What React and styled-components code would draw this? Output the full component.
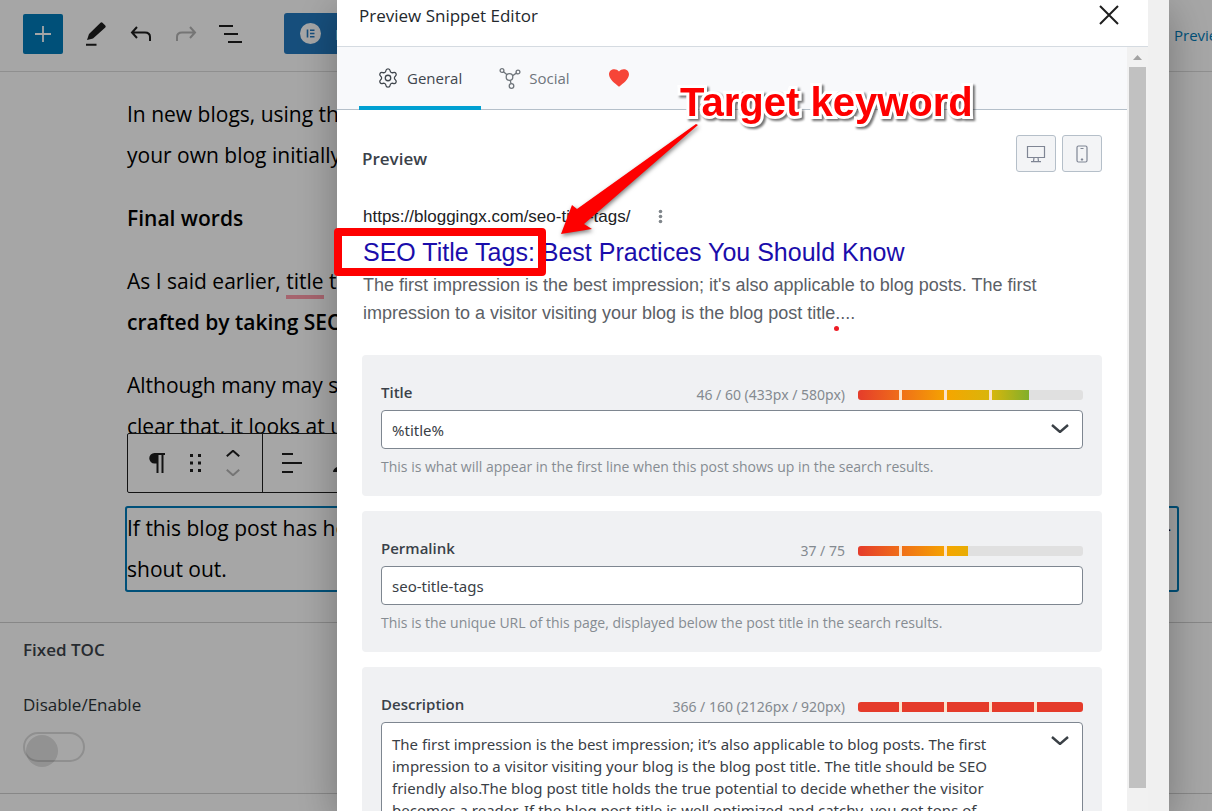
import { useState } from "react";
import styled, { createGlobalStyle } from "styled-components";
import { Settings } from "lucide-react";

const GlobalStyle = createGlobalStyle`
  * {
    box-sizing: border-box;
  }

  body {
    margin: 0;
    overflow: hidden;
    background: #fff;
    font-family: "Open Sans", "Noto Sans", sans-serif;
  }

  button {
    padding: 0;
    border: none;
    background: none;
    font: inherit;
    color: inherit;
  }

  svg {
    display: block;
    flex: none;
  }

  p,
  h1,
  h2,
  h3 {
    margin: 0;
  }
`;

//Editor behind the modal
const Editor = styled.div`
  height: 100vh;
  overflow: hidden;
`;

const TopBar = styled.header`
  display: flex;
  align-items: center;
  height: 72px;
  padding: 0 0 4px 23px;
  border-bottom: 1px solid #dcdcdc;
`;

const InserterButton = styled.button`
  display: grid;
  place-items: center;
  flex: none;
  width: 40px;
  height: 40px;
  margin-right: 12px;
  border-radius: 2px;
  background: #007cba;
`;

const ToolButton = styled.button`
  display: grid;
  place-items: center;
  flex: none;
  width: 41px;
  height: 40px;
  margin-right: 4px;
`;

const ElementorButton = styled.button`
  display: flex;
  align-items: center;
  gap: 14px;
  height: 41px;
  margin-left: 29px;
  padding: 0 16px;
  border-radius: 3px;
  background: #2379bf;
  color: #fff;
  font-size: 15px;
  white-space: nowrap;
`;

const PreviewLink = styled.a`
  flex: 0 0 38px;
  min-width: 0;
  margin-left: auto;
  padding-top: 2px;
  color: #007cba;
  font-size: 15px;
  text-decoration: none;
  white-space: nowrap;
`;

const Content = styled.main`
  display: flex;
  flex-direction: column;
  gap: 22px;
  padding: 22px 35px 32px 127px;
  color: #000;
  font-size: 21px;
  line-height: 41px;
  white-space: nowrap;
`;

const Heading = styled.h3`
  font-size: 21px;
  font-weight: 600;
`;

const Strong = styled.strong`
  font-weight: 600;
`;

const Marked = styled.span`
  display: inline-block;
  box-shadow: 0 4px 0 #ff9aa9;
  line-height: 28px;
`;

const SelectedBlock = styled.div`
  position: relative;
  margin-top: 39px;
  border-radius: 1px;
  box-shadow: 0 0 0 2px #007cba;
`;

const SpreadLine = styled.p`
  display: flex;
  justify-content: space-between;
  padding-right: 6px;
`;

const BlockToolbar = styled.div`
  position: absolute;
  left: 0;
  bottom: calc(100% + 15px);
  display: flex;
  height: 60px;
  border: 1px solid #1e1e1e;
  border-radius: 2px;
  background: #fff;
`;

const ToolbarGroup = styled.div`
  display: flex;
  align-items: center;
  gap: ${(props) => props.$gap}px;
  padding: 0 22px 0 18px;
  border-right: 1px solid #1e1e1e;
`;

const Movers = styled.div`
  display: flex;
  flex-direction: column;
  gap: 12px;
`;

const MetaBox = styled.section`
  display: flex;
  flex-direction: column;
  align-items: flex-start;
  height: 172px;
  padding: 15px 23px 0;
  border-top: 1px solid #d0d0d0;
  border-bottom: 1px solid #d0d0d0;
  color: #2c3338;
  font-size: 17px;
  line-height: 24px;
`;

const MetaTitle = styled.h2`
  margin-bottom: 31px;
  color: #3c434a;
  font-size: 17px;
  font-weight: 600;
`;

const Toggle = styled.input`
  appearance: none;
  width: 62px;
  height: 30px;
  margin: 15px 0 0;
  border: 2px solid #dcdcdc;
  border-radius: 16px;

  &::before {
    content: "";
    display: block;
    width: 32px;
    height: 32px;
    margin: 1px;
    border-radius: 50%;
    background: rgba(0, 0, 0, 0.12);
  }
`;

//Modal
const Overlay = styled.div`
  position: fixed;
  inset: 0;
  display: flex;
  padding: 0 43px 0 337px;
  background: rgba(0, 0, 0, 0.35);
`;

const Modal = styled.div`
  display: flex;
  flex: 1;
  min-width: 0;
  padding-right: 21px;
  background: #f0f0f0;
  box-shadow: 0 10px 40px rgba(0, 0, 0, 0.3);
`;

const ModalColumn = styled.div`
  display: flex;
  flex-direction: column;
  flex: 1;
  min-width: 0;
`;

const ModalHeader = styled.div`
  display: flex;
  justify-content: space-between;
  height: 47px;
  padding: 3px 28px 0 22px;
  border-bottom: 1px solid #d5dbe1;
  background: #fff;
`;

const ModalTitle = styled.h1`
  color: #23282d;
  font-size: 17px;
  font-weight: 500;
  line-height: 26px;
`;

const CloseButton = styled.button`
  height: 24px;
`;

const ModalBody = styled.div`
  display: flex;
  flex: 1;
  min-height: 0;
`;

const Panel = styled.div`
  flex: 1;
  min-width: 0;
  overflow: hidden;
  background: #fff;
`;

const ScrollTrack = styled.div`
  display: flex;
  flex-direction: column;
  align-items: center;
  flex: 0 0 21px;
  padding: 8px 0 23px;
  background: #f1f1f1;
`;

const ScrollThumb = styled.div`
  flex: 1;
  width: 17px;
  margin-top: 7px;
  background: #c1c1c1;
`;

const Tabs = styled.div`
  display: flex;
  height: 63px;
  padding-left: 22px;
  border-bottom: 1px solid #b5c0ca;
  background: #f8f9fb;
`;

const Tab = styled.button`
  display: flex;
  align-items: center;
  gap: 8px;
  height: 63px;
  padding: 2px 19px 0 18px;
  border-bottom: 4px solid ${(props) => (props.$active ? "#00a0d2" : "transparent")};
  color: ${(props) => (props.$active ? "#40464d" : "#6f757b")};
  font-size: 15px;
`;

const PanelContent = styled.div`
  display: flex;
  flex-direction: column;
  gap: 15px;
  padding: 25px 25px 0;
`;

const SectionHead = styled.div`
  display: flex;
  justify-content: space-between;
  align-items: center;
`;

const SectionTitle = styled.h2`
  padding-top: 10px;
  color: #3a4149;
  font-size: 17px;
  font-weight: 600;
`;

const DeviceButtons = styled.div`
  display: flex;
  gap: 6px;
`;

const DeviceButton = styled.button`
  display: grid;
  place-items: center;
  width: 40px;
  height: 37px;
  border: 1px solid #b5bfc9;
  border-radius: 3px;
  background: #f3f4f6;
  color: #7f8594;
`;

const Snippet = styled.div`
  display: flex;
  flex-direction: column;
  padding: 17px 0 13px 1px;
  font-family: "Liberation Sans", Arial, sans-serif;
`;

const SnippetUrl = styled.div`
  display: flex;
  align-items: center;
  gap: 28px;
  color: #202124;
  font-size: 17px;
  line-height: 26px;
`;

const SnippetTitle = styled.a`
  padding: 4px 0 1px;
  color: #1a0dab;
  font-size: 25px;
  line-height: 36px;
  text-decoration: none;
`;

const SnippetText = styled.p`
  color: #5b6066;
  font-size: 18px;
  line-height: 28px;
`;

const Card = styled.div`
  padding: 25px 19px 17px;
  border-radius: 4px;
  background: #f0f1f3;
`;

const CardHead = styled.div`
  display: flex;
  align-items: center;
  height: 30px;
  padding-bottom: 4px;
`;

const CardLabel = styled.label`
  margin: 0 auto 2px 0;
  color: #3a4149;
  font-size: 15px;
  font-weight: 600;
`;

const Counter = styled.span`
  margin-right: 13px;
  padding-top: 2px;
  color: #848a90;
  font-family: "Noto Sans", sans-serif;
  font-size: 14px;
`;

const Meter = styled.div`
  width: 225px;
  height: 10px;
  margin-top: 4px;
  border-radius: 3px;
  background: #e0e0e0;
  overflow: hidden;
`;

const MeterFill = styled.div`
  height: 100%;
  background: repeating-linear-gradient(
        90deg,
        transparent 0 41px,
        #fbe3cc 41px 44px,
        transparent 44px 45px
      )
      0 0 / 200px 100% no-repeat,
    ${(props) =>
      props.$over
        ? "#e53b2a"
        : "linear-gradient(90deg, #e53c2b, #f07018 44px, #f5a600 90px, #d7b60c 134px, #78ae2e 175px, #4caf50 225px)"};
`;

const FieldWrap = styled.div`
  display: flex;
  height: ${(props) => props.$height}px;
  padding-right: 13px;
  border: 1px solid #7e8690;
  border-radius: 4px;
  background: #fff;
`;

const TextInput = styled.input`
  flex: 1;
  min-width: 0;
  padding: 0 10px;
  border: none;
  outline: none;
  background: none;
  color: #3a4046;
  font-family: "Noto Sans", sans-serif;
  font-size: 15px;
`;

const TextArea = styled.textarea`
  flex: 1;
  min-width: 0;
  padding: 10px 10px 0;
  border: none;
  outline: none;
  resize: none;
  overflow: hidden;
  background: none;
  color: #3a4046;
  font-family: "Noto Sans", sans-serif;
  font-size: 15px;
  line-height: 22px;
`;

const VariableButton = styled.button`
  align-self: flex-start;
  padding-top: 13px;
`;

const Help = styled.p`
  padding-top: 6px;
  color: #868c92;
  font-size: 14px;
  line-height: 24px;
`;

//Marks drawn over the modal
const Annotations = styled.div`
  position: absolute;
  top: 0;
  left: 0;
  pointer-events: none;
`;

const KeywordBox = styled.div`
  position: absolute;
  top: 228px;
  left: 334px;
  width: 212px;
  height: 48px;
  border: 8px solid #fe0000;
  border-radius: 4px;
`;

const KeywordArrow = styled.svg`
  position: absolute;
  top: 110px;
  left: 550px;
  filter: drop-shadow(1px 2px 2px rgba(0, 0, 0, 0.5));
`;

const KeywordText = styled.div`
  position: absolute;
  top: 79px;
  left: 680px;
  color: #fe0000;
  font: bold 40px/46px "Liberation Sans", Arial, sans-serif;
  white-space: nowrap;
  -webkit-text-stroke: 6px #fff;
  paint-order: stroke fill;
  stroke-linejoin: round;
  filter: drop-shadow(2px 2px 1px rgba(0, 0, 0, 0.55));
`;

const RedDot = styled.div`
  position: absolute;
  top: 326px;
  left: 834px;
  width: 5px;
  height: 5px;
  border-radius: 50%;
  background: #ee1c25;
`;

const Chevron = ({ up, color = "#3a4046", size = 18, width = 2 }) => (
  <svg width={size} height={size / 2} viewBox="0 0 18 9" fill="none">
    <path d={up ? "M1 8 9 1l8 7" : "M1 1l8 7 8-7"} stroke={color} strokeWidth={width} />
  </svg>
);

const DESCRIPTION = `The first impression is the best impression; it’s also applicable to blog posts. The first
impression to a visitor visiting your blog is the blog post title. The title should be SEO
friendly also.The blog post title holds the true potential to decide whether the visitor
becomes a reader. If the blog post title is well optimized and catchy, you get tons of`;

function Field({ id, label, count, percent, over, help, height = 39, variables, children }) {
  return (
    <Card>
      <CardHead>
        <CardLabel htmlFor={id}>{label}</CardLabel>
        <Counter>{count}</Counter>
        <Meter>
          <MeterFill $over={over} style={{ width: `${percent}%` }} />
        </Meter>
      </CardHead>
      <FieldWrap $height={height}>
        {children}
        {variables && (
          <VariableButton aria-label="Variables">
            <Chevron width={2.4} />
          </VariableButton>
        )}
      </FieldWrap>
      {help && <Help>{help}</Help>}
    </Card>
  );
}

function EditorPage() {
  return (
    <Editor>
      <TopBar>
        <InserterButton aria-label="Add block">
          <svg width="16" height="16" viewBox="0 0 16 16" stroke="#fff" strokeWidth="1.8">
            <path d="M8 0v16M0 8h16" />
          </svg>
        </InserterButton>
        <ToolButton aria-label="Edit">
          <svg width="24" height="26" viewBox="0 0 24 26" fill="#1e1e1e">
            <path d="M3 19 5 13 16.500 1.800Q17.500.8 18.500 1.800L21.300 4.600Q22.200 5.500 21.300 6.400L9 17.500ZM2 22.800h10.500v2H2z" />
          </svg>
        </ToolButton>
        <ToolButton aria-label="Undo">
          <svg width="22" height="16" viewBox="0 0 22 16" fill="none" stroke="#1e1e1e" strokeWidth="2">
            <path d="M7 1 2 6.500 7 12M2 6.500h13q5 0 5 4.500v4" />
          </svg>
        </ToolButton>
        <ToolButton aria-label="Redo">
          <svg width="22" height="16" viewBox="0 0 22 16" fill="none" stroke="#b4b4b4" strokeWidth="2">
            <path d="M15 1l5 5.500-5 5.500M20 6.500H7q-5 0-5 4.500v4" />
          </svg>
        </ToolButton>
        <ToolButton aria-label="List view">
          <svg width="24" height="20" viewBox="0 0 24 20" stroke="#1e1e1e" strokeWidth="2">
            <path d="M0 2h14M5 10h14M9 18h14" />
          </svg>
        </ToolButton>
        <ElementorButton>
          <svg width="21" height="21" viewBox="0 0 21 21">
            <circle cx="10.500" cy="10.500" r="10.500" fill="#fff" />
            <path d="M7.500 6.500v8M10 7.300h4.500M10 10.500h4.500M10 13.700h4.500" stroke="#2379bf" strokeWidth="1.600" />
          </svg>
          Edit
        </ElementorButton>
        <PreviewLink href="#preview">Preview</PreviewLink>
      </TopBar>
      <Content>
        <p>
          In new blogs, using the
          <br />
          your own blog initially
        </p>
        <Heading>Final words</Heading>
        <p>
          As I said earlier, <Marked>title</Marked> to
          <br />
          <Strong>crafted by taking SEO</Strong>
        </p>
        <p>
          Although many may so
          <br />
          clear that, it looks at us
        </p>
        <SelectedBlock>
          <BlockToolbar>
            <ToolbarGroup $gap={23}>
              <svg width="20" height="22" viewBox="0 0 20 22">
                <path d="M9 1h10v2h-1.500v18h-2V3h-3v18h-2v-9.500H8.500A5.200 5.200 0 0 1 8.500 1z" fill="#1e1e1e" />
              </svg>
              <svg width="14" height="20" viewBox="0 0 14 20" fill="#1e1e1e">
                <path d="M1 1h3v3H1zM9 1h3v3H9zM1 8.500h3v3H1zM9 8.500h3v3H9zM1 16h3v3H1zM9 16h3v3H9z" />
              </svg>
              <Movers>
                <Chevron up size={14} width={2.6} color="#1e1e1e" />
                <Chevron size={14} width={2.6} color="#b4b4b4" />
              </Movers>
            </ToolbarGroup>
            <ToolbarGroup $gap={30}>
              <svg width="22" height="22" viewBox="0 0 22 22" stroke="#1e1e1e" strokeWidth="2">
                <path d="M1 2h11M1 11h20M1 20h11" />
              </svg>
              <svg width="22" height="22" viewBox="0 0 22 22" fill="#1e1e1e">
                <path d="M0 20q0-3 4-5v5z" />
              </svg>
            </ToolbarGroup>
          </BlockToolbar>
          <SpreadLine>
            <span>If this blog post has he</span>
            <span>-</span>
          </SpreadLine>
          <p>shout out.</p>
        </SelectedBlock>
      </Content>
      <MetaBox>
        <MetaTitle>Fixed TOC</MetaTitle>
        <label htmlFor="fixed-toc">Disable/Enable</label>
        <Toggle id="fixed-toc" type="checkbox" />
      </MetaBox>
    </Editor>
  );
}

function App() {
  const [title, setTitle] = useState("%title%");
  const [permalink, setPermalink] = useState("seo-title-tags");
  const [description, setDescription] = useState(DESCRIPTION);

  return (
    <>
      <GlobalStyle />
      <EditorPage />
      <Overlay>
        <Modal role="dialog" aria-labelledby="modal-title">
          <ModalColumn>
            <ModalHeader>
              <ModalTitle id="modal-title">Preview Snippet Editor</ModalTitle>
              <CloseButton aria-label="Close">
                <svg width="22" height="24" viewBox="0 0 22 24" stroke="#1e1e1e" strokeWidth="2">
                  <path d="M2 3l18 18M20 3 2 21" />
                </svg>
              </CloseButton>
            </ModalHeader>
            <ModalBody>
              <Panel>
                <Tabs>
                  <Tab $active>
                    <Settings size={22} strokeWidth={1.4} />
                    General
                  </Tab>
                  <Tab>
                    <svg width="22" height="22" viewBox="0 0 22 22" fill="none" stroke="currentColor" strokeWidth="1.300">
                      <circle cx="10.500" cy="10" r="3.300" />
                      <circle cx="3" cy="3.500" r="1.900" />
                      <circle cx="19" cy="5" r="1.900" />
                      <circle cx="12.500" cy="19" r="2.300" />
                      <path d="M4.500 4.800 8 7.800M13.600 8.700l3.700-2.600M11.200 13.200l.8 3.500" />
                    </svg>
                    Social
                  </Tab>
                  <Tab aria-label="Support">
                    <svg width="22" height="18" viewBox="-2 0 22 18" fill="#f64538">
                      <path d="M10 17.700C6 14.500 0 10.300 0 5.300 0 .3 6.700-1.600 10 2.600 13.300-1.600 20 .3 20 5.300c0 5-6 9.200-10 12.400z" />
                    </svg>
                  </Tab>
                </Tabs>
                <PanelContent>
                  <SectionHead>
                    <SectionTitle>Preview</SectionTitle>
                    <DeviceButtons>
                      <DeviceButton aria-label="Desktop">
                        <svg width="20" height="18" viewBox="0 0 20 18" fill="none" stroke="currentColor" strokeWidth="1.200">
                          <path d="M1.500 1.500h17v11h-17zM8 12.500l-.5 4M12 12.500l.5 4M5 16.700h10" />
                        </svg>
                      </DeviceButton>
                      <DeviceButton aria-label="Mobile">
                        <svg width="12" height="18" viewBox="0 0 12 18" fill="none" stroke="currentColor" strokeWidth="1.200">
                          <rect x="1" y="1" width="10" height="16" rx="1.500" />
                          <path d="M4.500 3.500h3M4.800 14.500h2.400M6 13.300v2.400" />
                        </svg>
                      </DeviceButton>
                    </DeviceButtons>
                  </SectionHead>
                  <Snippet>
                    <SnippetUrl>
                      https://bloggingx.com/seo-title-tags/
                      <svg width="5" height="16" viewBox="0 0 5 16" fill="#80868b">
                        <circle cx="2.500" cy="2.500" r="1.800" />
                        <circle cx="2.500" cy="7.500" r="1.800" />
                        <circle cx="2.500" cy="12.500" r="1.800" />
                      </svg>
                    </SnippetUrl>
                    <SnippetTitle href="#snippet">SEO Title Tags: Best Practices You Should Know</SnippetTitle>
                    <SnippetText>
                      The first impression is the best impression; it's also applicable to blog posts. The first
                      <br />
                      impression to a visitor visiting your blog is the blog post title....
                    </SnippetText>
                  </Snippet>
                  <Field
                    id="title"
                    label="Title"
                    count="46 / 60 (433px / 580px)"
                    percent={76}
                    help="This is what will appear in the first line when this post shows up in the search results."
                    variables
                  >
                    <TextInput id="title" value={title} onChange={(e) => setTitle(e.target.value)} />
                  </Field>
                  <Field
                    id="permalink"
                    label="Permalink"
                    count="37 / 75"
                    percent={49}
                    help="This is the unique URL of this page, displayed below the post title in the search results."
                  >
                    <TextInput id="permalink" value={permalink} onChange={(e) => setPermalink(e.target.value)} />
                  </Field>
                  <Field
                    id="description"
                    label="Description"
                    count="366 / 160 (2126px / 920px)"
                    percent={100}
                    height={160}
                    over
                    variables
                  >
                    <TextArea id="description" value={description} onChange={(e) => setDescription(e.target.value)} />
                  </Field>
                </PanelContent>
              </Panel>
              <ScrollTrack>
                <svg width="9" height="5" viewBox="0 0 9 5" fill="#a3a3a3">
                  <path d="M4.500 0 9 5H0z" />
                </svg>
                <ScrollThumb />
              </ScrollTrack>
            </ModalBody>
          </ModalColumn>
        </Modal>
        <Annotations>
          <KeywordBox />
          <KeywordArrow width="156" height="134" viewBox="0 0 156 134">
            <path d="M11 124 22 95l5 4L146 14l2 1L34 114l8 5z" fill="#fe0000" />
          </KeywordArrow>
          <KeywordText>Target keyword</KeywordText>
          <RedDot />
        </Annotations>
      </Overlay>
    </>
  );
}

export default App;
